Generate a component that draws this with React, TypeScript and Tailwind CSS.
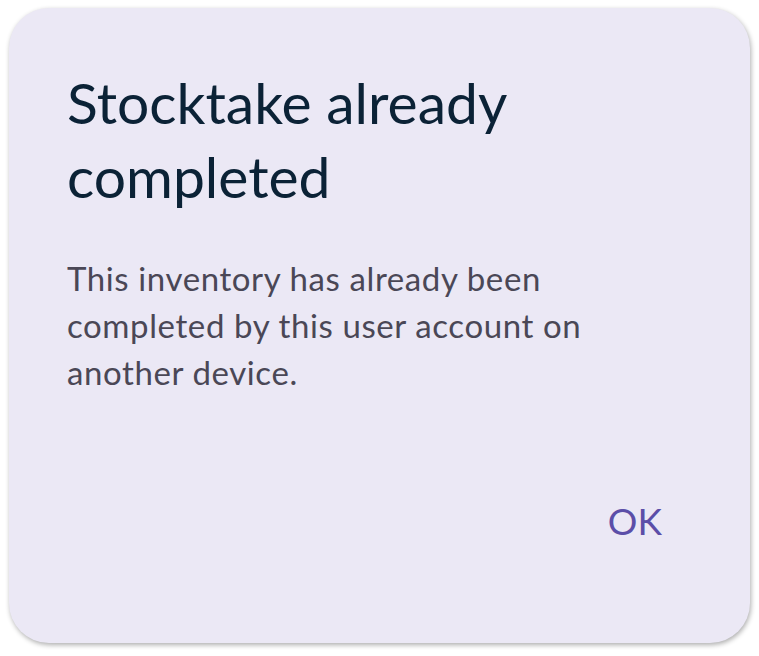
export default function App() {
  return (
    <div className="w-[759px] h-[656px] bg-white pt-[8px] pl-[9px] font-['Lato','Noto_Sans',sans-serif]">
      <div className="w-[741px] h-[635px] rounded-[40px] bg-[#ebe8f5] shadow-[1px_2px_5px_rgba(0,0,0,0.32)] flex flex-col pl-[58px] pr-[88px] pt-[57px] pb-[104px]">
        <h1 className="text-[57px] leading-[74px] text-[#0b2236]">Stocktake already completed</h1>
        <p className="mt-[42px] text-[33px] leading-[47px] tracking-[0.6px] text-[#4a4756] pr-[40px]">
          This inventory has already been completed by this user account on another device.
        </p>
        <div className="mt-auto flex justify-end">
          <button className="text-[37px] leading-[37px] text-[#5b4ea8]">OK</button>
        </div>
      </div>
    </div>
  );
}
